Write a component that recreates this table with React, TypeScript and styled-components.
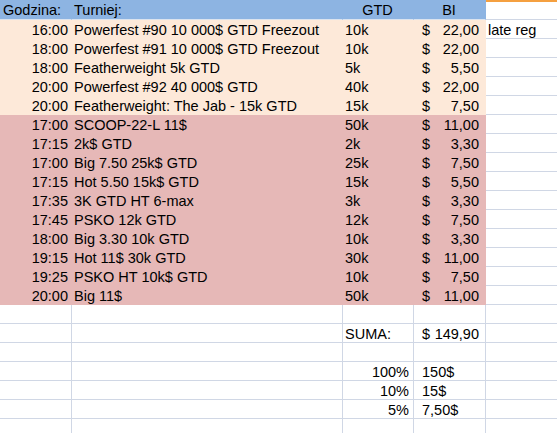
import React from "react";
import styled, { createGlobalStyle } from "styled-components";

const GRID = "#d0d7e5";
const BLUE = "#8db4e2";
const BEIGE = "#fde9d9";
const PINK = "#e6b8b7";

const Global = createGlobalStyle`
  html, body { margin: 0; padding: 0; background: #fff; overflow: hidden; }
  body { font-family: "Liberation Sans", Arial, sans-serif; font-size: 14.5px; color: #000; }
`;

const Sheet = styled.div`
  width: 557px;
  height: 433px;
  overflow: hidden;
  display: flex;
  flex-direction: column;
`;

const Row = styled.div<{ $h?: number }>`
  display: grid;
  grid-template-columns: 72px 271px 71px 72px 90px;
  height: ${(p) => p.$h ?? 19}px;
  flex: none;
`;

type Align = "left" | "right" | "center";

const Cell = styled.div<{ $fill?: string; $align?: Align; $pl?: number; $pr?: number; $top?: string }>`
  box-sizing: border-box;
  border-right: 1px solid ${(p) => p.$fill ?? GRID};
  border-bottom: 1px solid ${(p) => p.$fill ?? GRID};
  border-top: ${(p) => (p.$top ? `2px solid ${p.$top}` : "none")};
  background: ${(p) => p.$fill ?? "#fff"};
  padding: ${(p) => (p.$top ? 0 : 2)}px ${(p) => p.$pr ?? 3}px 0 ${(p) => p.$pl ?? 2}px;
  line-height: 16px;
  white-space: nowrap;
  text-align: ${(p) => p.$align ?? "left"};
`;

const HeaderCell = styled(Cell)`
  border-bottom-color: #dbe3ee;
`;

const Accounting = styled(Cell)`
  display: flex;
  justify-content: space-between;
`;

const Currency = styled.span`
  padding-left: 6px;
`;

const Amount = styled.span`
  padding-right: 3px;
`;

type DataRow = { time: string; name: string; gtd: string; bi: string; note?: string };

const beige: DataRow[] = [
  { time: "16:00", name: "Powerfest #90 10 000$ GTD Freezout", gtd: "10k", bi: "22,00", note: "late reg" },
  { time: "18:00", name: "Powerfest #91 10 000$ GTD Freezout", gtd: "10k", bi: "22,00" },
  { time: "18:00", name: "Featherweight 5k GTD", gtd: "5k", bi: "5,50" },
  { time: "20:00", name: "Powerfest #92 40 000$ GTD", gtd: "40k", bi: "22,00" },
  { time: "20:00", name: "Featherweight: The Jab - 15k GTD", gtd: "15k", bi: "7,50" },
];

const pink: DataRow[] = [
  { time: "17:00", name: "SCOOP-22-L 11$", gtd: "50k", bi: "11,00" },
  { time: "17:15", name: "2k$ GTD", gtd: "2k", bi: "3,30" },
  { time: "17:00", name: "Big 7.50 25k$ GTD", gtd: "25k", bi: "7,50" },
  { time: "17:15", name: "Hot 5.50 15k$ GTD", gtd: "15k", bi: "5,50" },
  { time: "17:35", name: "3K GTD HT 6-max", gtd: "3k", bi: "3,30" },
  { time: "17:45", name: "PSKO 12k GTD", gtd: "12k", bi: "7,50" },
  { time: "18:00", name: "Big 3.30 10k GTD", gtd: "10k", bi: "3,30" },
  { time: "19:15", name: "Hot 11$ 30k GTD", gtd: "30k", bi: "11,00" },
  { time: "19:25", name: "PSKO HT 10k$ GTD", gtd: "10k", bi: "7,50" },
  { time: "20:00", name: "Big 11$", gtd: "50k", bi: "11,00" },
];

const TournamentRow = ({ r, fill }: { r: DataRow; fill: string }) => (
  <Row>
    <Cell $fill={fill} $align="right">{r.time}</Cell>
    <Cell $fill={fill} $pl={2}>{r.name}</Cell>
    <Cell $fill={fill} $pl={2}>{r.gtd}</Cell>
    <Accounting $fill={fill}>
      <Currency>$</Currency>
      <Amount>{r.bi}</Amount>
    </Accounting>
    <Cell>{r.note ?? ""}</Cell>
  </Row>
);

const EmptyRow = () => (
  <Row>
    <Cell />
    <Cell />
    <Cell />
    <Cell />
    <Cell />
  </Row>
);

const PercentRow = ({ pct, value }: { pct: string; value: string }) => (
  <Row>
    <Cell />
    <Cell />
    <Cell $align="right" $pr={4}>{pct}</Cell>
    <Cell $pl={8}>{value}</Cell>
    <Cell />
  </Row>
);

export default function App() {
  return (
    <>
      <Global />
      <Sheet>
        <Row $h={20}>
          <HeaderCell $fill={BLUE} $pl={3}>Godzina:</HeaderCell>
          <HeaderCell $fill={BLUE}>Turniej:</HeaderCell>
          <HeaderCell $fill={BLUE} $align="center">GTD</HeaderCell>
          <HeaderCell $fill={BLUE} $align="center">BI</HeaderCell>
          <Cell $top="#f5a040" />
        </Row>
        {beige.map((r, i) => (
          <TournamentRow key={"b" + i} r={r} fill={BEIGE} />
        ))}
        {pink.map((r, i) => (
          <TournamentRow key={"p" + i} r={r} fill={PINK} />
        ))}
        <EmptyRow />
        <Row>
          <Cell />
          <Cell />
          <Cell $pl={2}>SUMA:</Cell>
          <Accounting>
            <Currency>$</Currency>
            <Amount>149,90</Amount>
          </Accounting>
          <Cell />
        </Row>
        <EmptyRow />
        <PercentRow pct="100%" value="150$" />
        <PercentRow pct="10%" value="15$" />
        <PercentRow pct="5%" value="7,50$" />
        <EmptyRow />
      </Sheet>
    </>
  );
}
